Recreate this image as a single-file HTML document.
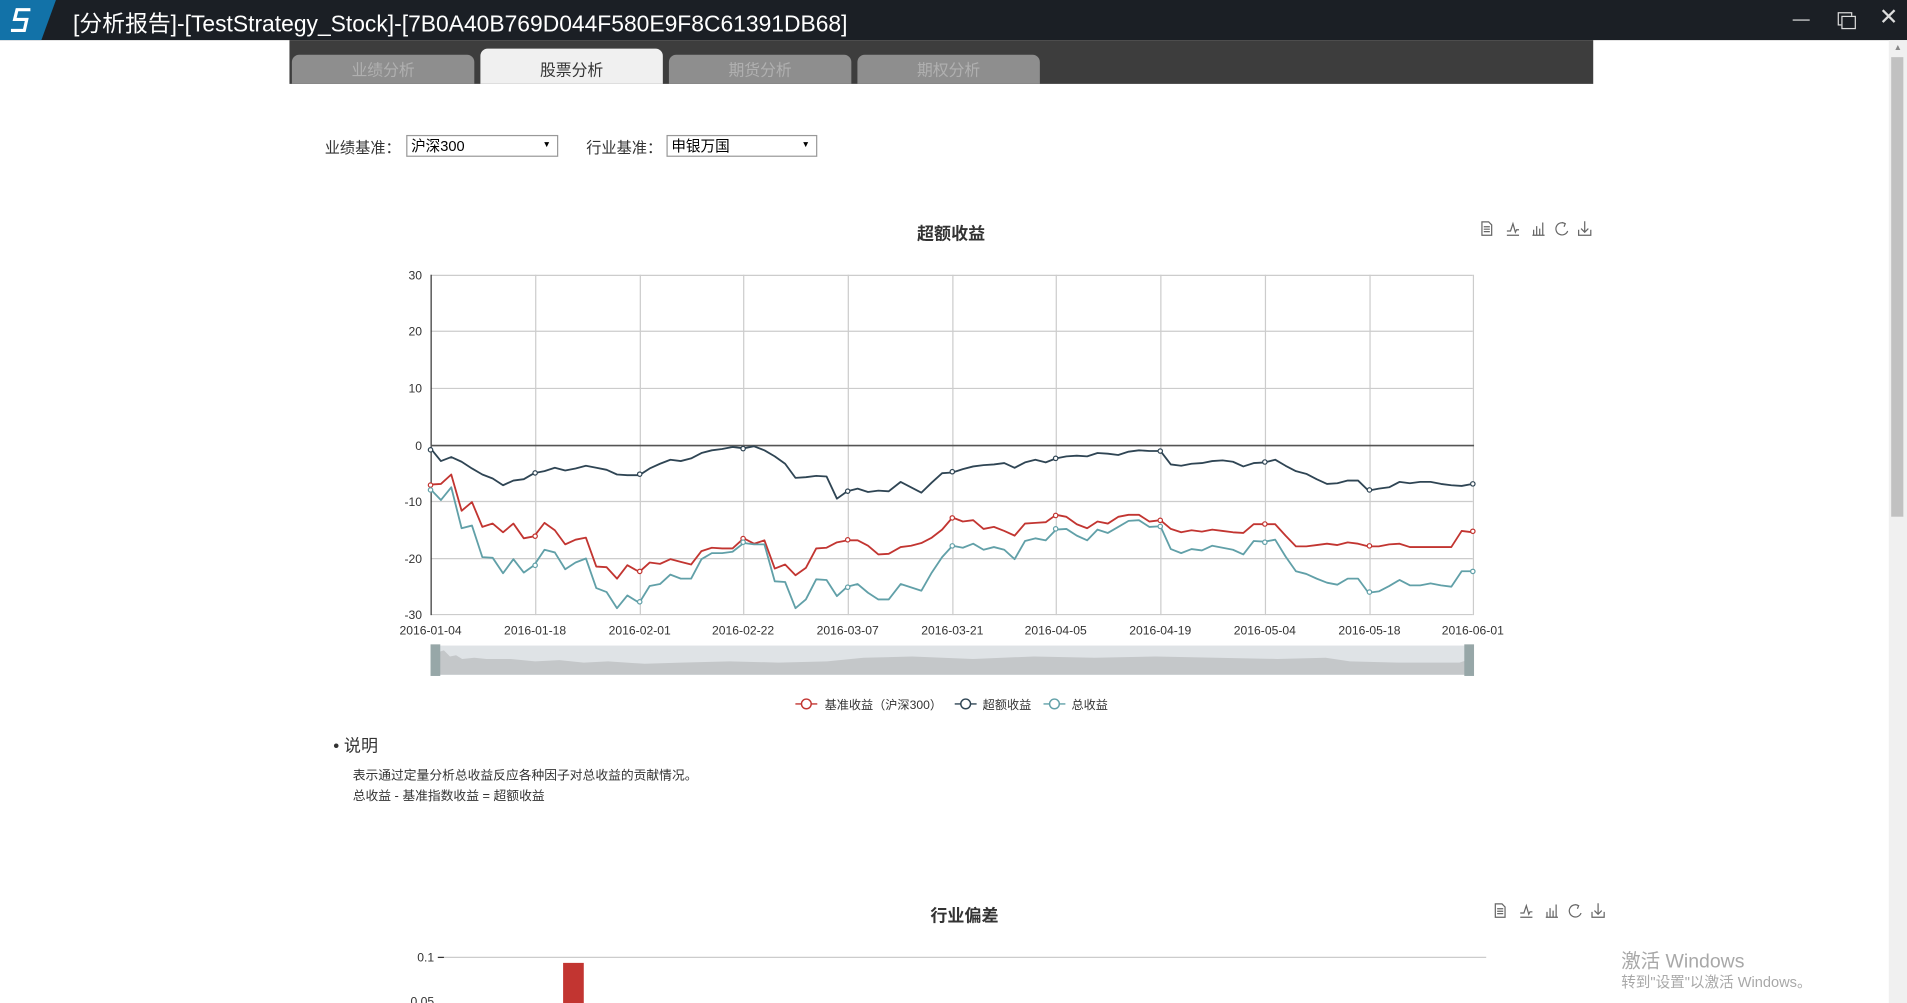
<!DOCTYPE html>
<html><head><meta charset="utf-8"><style>
html,body{margin:0;padding:0;width:1907px;height:1003px;overflow:hidden;background:#fff}
#w{position:absolute;left:0;top:0;width:1568px;height:825px;transform:scale(1.21620,1.21576);transform-origin:0 0;font-family:"Liberation Sans","Noto Sans CJK SC",sans-serif}
.a{position:absolute}
.tab{position:absolute;top:45px;width:150px;height:24px;background:#8e8e8e;color:#b0b0b0;font-size:13px;text-align:center;line-height:26px;border-radius:6px 6px 0 0}
.sel{position:absolute;top:111px;height:16px;border:1px solid #999;font-size:12px;line-height:16px;padding-left:3px;background:#fff}
.sel:after{content:"▼";position:absolute;right:5px;top:0;font-size:7px}
.lbl{position:absolute;top:111px;font-size:12.5px;color:#333}
</style></head><body><div id="w">
<div class="a" style="left:0;top:0;width:1568px;height:33px;background:#1b1f25"></div>
<svg class="a" style="left:0;top:0" width="60" height="33"><polygon points="0,0 46,0 34,33 0,33" fill="#1272a8"/><path d="M25 8 H14 L12 16 H22 L20 25 H9" fill="none" stroke="#fff" stroke-width="2.6"/></svg>
<div class="a" style="left:60px;top:5px;font-size:18.8px;color:#fff;white-space:nowrap">[分析报告]-[TestStrategy_Stock]-[7B0A40B769D044F580E9F8C61391DB68]</div>
<div class="a" style="left:1474px;top:16px;width:14px;height:1px;background:#ddd"></div>
<div class="a" style="left:1511px;top:10px;width:10px;height:9px;border:1px solid #ddd"></div>
<div class="a" style="left:1514px;top:13px;width:10px;height:9px;border:1px solid #ddd;background:#1b1f25"></div>
<div class="a" style="left:1545px;top:3px;font-size:19px;color:#ddd">✕</div>
<div class="a" style="left:238px;top:33px;width:1072px;height:36px;background:#3d3d3d"></div>
<div class="tab" style="left:240px">业绩分析</div>
<div class="tab" style="left:395px;top:40px;height:29px;background:#f0f0f0;color:#333;line-height:36px">股票分析</div>
<div class="tab" style="left:550px">期货分析</div>
<div class="tab" style="left:705px">期权分析</div>
<div class="a" style="left:1553px;top:33px;width:15px;height:792px;background:#f0f0f0"></div>
<div class="a" style="left:1555px;top:47px;width:10px;height:378px;background:#c1c1c1"></div>
<div class="a" style="left:1557px;top:36px;font-size:7px;color:#888">▲</div>
<div class="lbl" style="left:267px">业绩基准：</div>
<div class="sel" style="left:334px;width:120px">沪深300</div>
<div class="lbl" style="left:482px">行业基准：</div>
<div class="sel" style="left:548px;width:119px">申银万国</div>
<div class="a" style="left:742px;top:182px;width:80px;text-align:center;font-size:14px;font-weight:bold;color:#333">超额收益</div>
<div class="a" style="left:753px;top:743px;width:80px;text-align:center;font-size:14px;font-weight:bold;color:#333">行业偏差</div>
<svg class="a" style="left:0;top:0" width="1568" height="825" font-family="Liberation Sans" font-size="10" fill="#333">
<defs><g id="tb" fill="none" stroke="#666" stroke-width="1">
<path d="M0.5 0.5 H6 L8.5 3 V11.5 H0.5 Z M2 4.5 H7 M2 6.5 H7 M2 8.5 H7"/>
<path d="M21 11.5 H31 M21 8 L24 8 L26 2 L28 9 L29 7 L31 7"/>
<path d="M42 11.5 H52 M43 11 V7 M45.5 11 V4 M48 11 V6 M50.5 11 V1"/>
<path d="M69 2 A5 5 0 1 0 71 8 M66.5 1 L69 2 L68 4.5"/>
<path d="M85 0 V9 M82 6 L85 9 L88 6 M80 7 V11.5 H90 V7"/>
</g></defs>
<use href="#tb" x="1218" y="182"/>
<use href="#tb" x="1229" y="743"/>
<g stroke="#ccc" stroke-width="1">
<line x1="354" y1="226.5" x2="1211" y2="226.5"/><line x1="354" y1="272.5" x2="1211" y2="272.5"/><line x1="354" y1="319.5" x2="1211" y2="319.5"/><line x1="354" y1="412.5" x2="1211" y2="412.5"/><line x1="354" y1="459.5" x2="1211" y2="459.5"/><line x1="354" y1="505.5" x2="1211" y2="505.5"/>
<line x1="440.5" y1="226" x2="440.5" y2="506"/><line x1="526.5" y1="226" x2="526.5" y2="506"/><line x1="611.5" y1="226" x2="611.5" y2="506"/><line x1="697.5" y1="226" x2="697.5" y2="506"/><line x1="783.5" y1="226" x2="783.5" y2="506"/><line x1="868.5" y1="226" x2="868.5" y2="506"/><line x1="954.5" y1="226" x2="954.5" y2="506"/><line x1="1040.5" y1="226" x2="1040.5" y2="506"/><line x1="1126.5" y1="226" x2="1126.5" y2="506"/><line x1="1211.5" y1="226" x2="1211.5" y2="506"/>
</g>
<line x1="354.5" y1="226" x2="354.5" y2="506" stroke="#333"/>
<line x1="354" y1="366.5" x2="1212" y2="366.5" stroke="#555" stroke-width="1.3"/>
<g text-anchor="end"><text x="347" y="230">30</text><text x="347" y="276">20</text><text x="347" y="323">10</text><text x="347" y="370">0</text><text x="347" y="416">-10</text><text x="347" y="463">-20</text><text x="347" y="509">-30</text></g>
<g text-anchor="middle"><text x="354" y="522">2016-01-04</text><text x="440" y="522">2016-01-18</text><text x="526" y="522">2016-02-01</text><text x="611" y="522">2016-02-22</text><text x="697" y="522">2016-03-07</text><text x="783" y="522">2016-03-21</text><text x="868" y="522">2016-04-05</text><text x="954" y="522">2016-04-19</text><text x="1040" y="522">2016-05-04</text><text x="1126" y="522">2016-05-18</text><text x="1211" y="522">2016-06-01</text></g>
<g transform="matrix(0.6552 0 0 0.2763 312.72 162.9)" fill="none" stroke-width="1.5" stroke-linejoin="round">
<polyline vector-effect="non-scaling-stroke" stroke="#2f4554" points="63,745 76,783 89,771 102,785 115,805 128,823 141,835 154,855 167,841 180,837 193,819 206,813 219,803 232,811 245,805 258,797 271,803 284,809 297,823 310,825 325,825 338,805 351,791 364,779 377,783 390,775 403,759 416,751 429,747 442,741 456,745 469,739 482,751 495,769 508,791 521,833 534,831 547,827 560,829 573,895 586,873 599,865 612,875 625,871 638,873 653,845 666,861 679,877 692,847 705,819 718,817 731,807 744,799 757,795 770,793 783,789 796,803 809,787 822,779 835,787 848,775 861,769 874,767 887,769 900,759 913,761 926,765 939,755 952,751 965,753 979,753 992,793 1005,797 1018,791 1031,789 1044,783 1057,781 1070,785 1083,799 1096,789 1110,787 1123,779 1136,797 1149,813 1162,821 1175,837 1188,851 1201,849 1214,841 1227,841 1240,871 1253,865 1266,861 1279,845 1292,849 1305,845 1318,845 1331,851 1344,855 1357,857 1371,851"/>
<polyline vector-effect="non-scaling-stroke" stroke="#c23531" points="63,853 76,851 89,823 102,931 115,905 128,979 141,969 154,995 167,969 180,1013 193,1007 206,967 219,989 232,1031 245,1017 258,1011 271,1097 284,1099 297,1133 310,1093 325,1113 338,1085 351,1089 364,1075 377,1083 390,1091 403,1051 416,1041 429,1043 442,1043 456,1013 469,1029 482,1019 495,1103 508,1091 521,1123 534,1101 547,1043 560,1041 573,1025 586,1019 599,1019 612,1035 625,1061 638,1059 653,1039 666,1035 679,1027 692,1011 705,987 718,951 731,963 744,959 757,985 770,979 783,991 796,1005 809,969 822,967 835,965 848,943 861,949 874,971 887,983 900,963 913,969 926,949 939,943 952,943 965,963 979,959 992,985 1005,995 1018,989 1031,993 1044,987 1057,991 1070,995 1083,997 1096,971 1110,971 1123,971 1136,1005 1149,1037 1162,1037 1175,1033 1188,1029 1201,1033 1214,1025 1227,1029 1240,1037 1253,1037 1266,1031 1279,1029 1292,1039 1305,1039 1318,1039 1331,1039 1344,1039 1357,991 1371,995"/>
<polyline vector-effect="non-scaling-stroke" stroke="#61a0a8" points="63,867 76,899 89,861 102,983 115,975 128,1069 141,1071 154,1117 167,1075 180,1115 193,1093 206,1047 219,1055 232,1105 245,1085 258,1073 271,1161 284,1173 297,1221 310,1183 325,1205 338,1155 351,1149 364,1121 377,1133 390,1133 403,1075 416,1057 429,1057 442,1053 456,1027 469,1031 482,1031 495,1141 508,1143 521,1221 534,1195 547,1135 560,1137 573,1185 586,1157 599,1149 612,1175 625,1195 638,1195 653,1149 666,1159 679,1169 692,1115 705,1069 718,1035 731,1041 744,1029 757,1047 770,1039 783,1047 796,1075 809,1021 822,1013 835,1019 848,987 861,985 874,1005 887,1019 900,987 913,997 926,979 939,961 952,959 965,979 979,977 992,1045 1005,1057 1018,1045 1031,1049 1044,1035 1057,1041 1070,1047 1083,1061 1096,1021 1110,1023 1123,1017 1136,1067 1149,1111 1162,1119 1175,1133 1188,1145 1201,1151 1214,1133 1227,1133 1240,1175 1253,1171 1266,1155 1279,1137 1292,1153 1305,1153 1318,1147 1331,1153 1344,1157 1357,1111 1371,1111"/>
</g>
<g fill="#fff" stroke-width="1">
<circle cx="354" cy="370" r="1.8" stroke="#2f4554"/><circle cx="440" cy="389" r="1.8" stroke="#2f4554"/><circle cx="526" cy="390" r="1.8" stroke="#2f4554"/><circle cx="611" cy="369" r="1.8" stroke="#2f4554"/><circle cx="697" cy="404" r="1.8" stroke="#2f4554"/><circle cx="783" cy="388" r="1.8" stroke="#2f4554"/><circle cx="868" cy="377" r="1.8" stroke="#2f4554"/><circle cx="954" cy="371" r="1.8" stroke="#2f4554"/><circle cx="1040" cy="380" r="1.8" stroke="#2f4554"/><circle cx="1126" cy="403" r="1.8" stroke="#2f4554"/><circle cx="1211" cy="398" r="1.8" stroke="#2f4554"/>
<circle cx="354" cy="399" r="1.8" stroke="#c23531"/><circle cx="440" cy="441" r="1.8" stroke="#c23531"/><circle cx="526" cy="470" r="1.8" stroke="#c23531"/><circle cx="611" cy="443" r="1.8" stroke="#c23531"/><circle cx="697" cy="444" r="1.8" stroke="#c23531"/><circle cx="783" cy="426" r="1.8" stroke="#c23531"/><circle cx="868" cy="424" r="1.8" stroke="#c23531"/><circle cx="954" cy="428" r="1.8" stroke="#c23531"/><circle cx="1040" cy="431" r="1.8" stroke="#c23531"/><circle cx="1126" cy="449" r="1.8" stroke="#c23531"/><circle cx="1211" cy="437" r="1.8" stroke="#c23531"/>
<circle cx="354" cy="403" r="1.8" stroke="#61a0a8"/><circle cx="440" cy="465" r="1.8" stroke="#61a0a8"/><circle cx="526" cy="495" r="1.8" stroke="#61a0a8"/><circle cx="611" cy="446" r="1.8" stroke="#61a0a8"/><circle cx="697" cy="483" r="1.8" stroke="#61a0a8"/><circle cx="783" cy="449" r="1.8" stroke="#61a0a8"/><circle cx="868" cy="435" r="1.8" stroke="#61a0a8"/><circle cx="954" cy="433" r="1.8" stroke="#61a0a8"/><circle cx="1040" cy="446" r="1.8" stroke="#61a0a8"/><circle cx="1126" cy="487" r="1.8" stroke="#61a0a8"/><circle cx="1211" cy="470" r="1.8" stroke="#61a0a8"/>
</g>
<rect x="356" y="531" width="853" height="24" fill="#dfe3e6"/>
<polygon fill="#c4c7c9" points="358,555 358,537 365,535 370,540 375,539 380,542 390,541 400,542 420,542 440,544 460,543 480,545 500,544 530,546 560,545 600,544 640,545 680,544 710,541 750,540 800,542 850,540 900,541 950,540 1000,541 1050,542 1090,541 1110,544 1150,545 1200,545 1209,542 1209,555"/>
<rect x="354" y="530" width="8" height="26" fill="#97a7a8"/><rect x="1204" y="530" width="8" height="26" fill="#97a7a8"/>
<g fill="#fff" stroke-width="1.2"><line x1="654" y1="579" x2="672" y2="579" stroke="#c23531"/><circle cx="663" cy="579" r="4" stroke="#c23531"/><line x1="785" y1="579" x2="803" y2="579" stroke="#2f4554"/><circle cx="794" cy="579" r="4" stroke="#2f4554"/><line x1="858" y1="579" x2="876" y2="579" stroke="#61a0a8"/><circle cx="867" cy="579" r="4" stroke="#61a0a8"/></g>
<g font-family="Liberation Sans,Noto Sans CJK SC,sans-serif" font-size="10" fill="#333"><text x="678" y="583">基准收益（沪深300）</text><text x="808" y="583">超额收益</text><text x="881" y="583">总收益</text></g>
<line x1="360" y1="787.5" x2="1222" y2="787.5" stroke="#ccc"/>
<line x1="360" y1="787.5" x2="365" y2="787.5" stroke="#333"/>
<text x="357" y="791" text-anchor="end">0.1</text><text x="357" y="827" text-anchor="end">0.05</text>
<rect x="463" y="792" width="17" height="40" fill="#c23531"/>
</svg>
<div class="a" style="left:274px;top:603px;font-size:14px;color:#333">• 说明</div>
<div class="a" style="left:290px;top:630px;font-size:10.5px;color:#333;line-height:17px">表示通过定量分析总收益反应各种因子对总收益的贡献情况。<br>总收益 - 基准指数收益 = 超额收益</div>
<div class="a" style="left:1333px;top:777px;font-size:16px;color:#a8a8a8">激活 Windows</div>
<div class="a" style="left:1333px;top:799px;font-size:12px;color:#a8a8a8">转到"设置"以激活 Windows。</div>
</div></body></html>
